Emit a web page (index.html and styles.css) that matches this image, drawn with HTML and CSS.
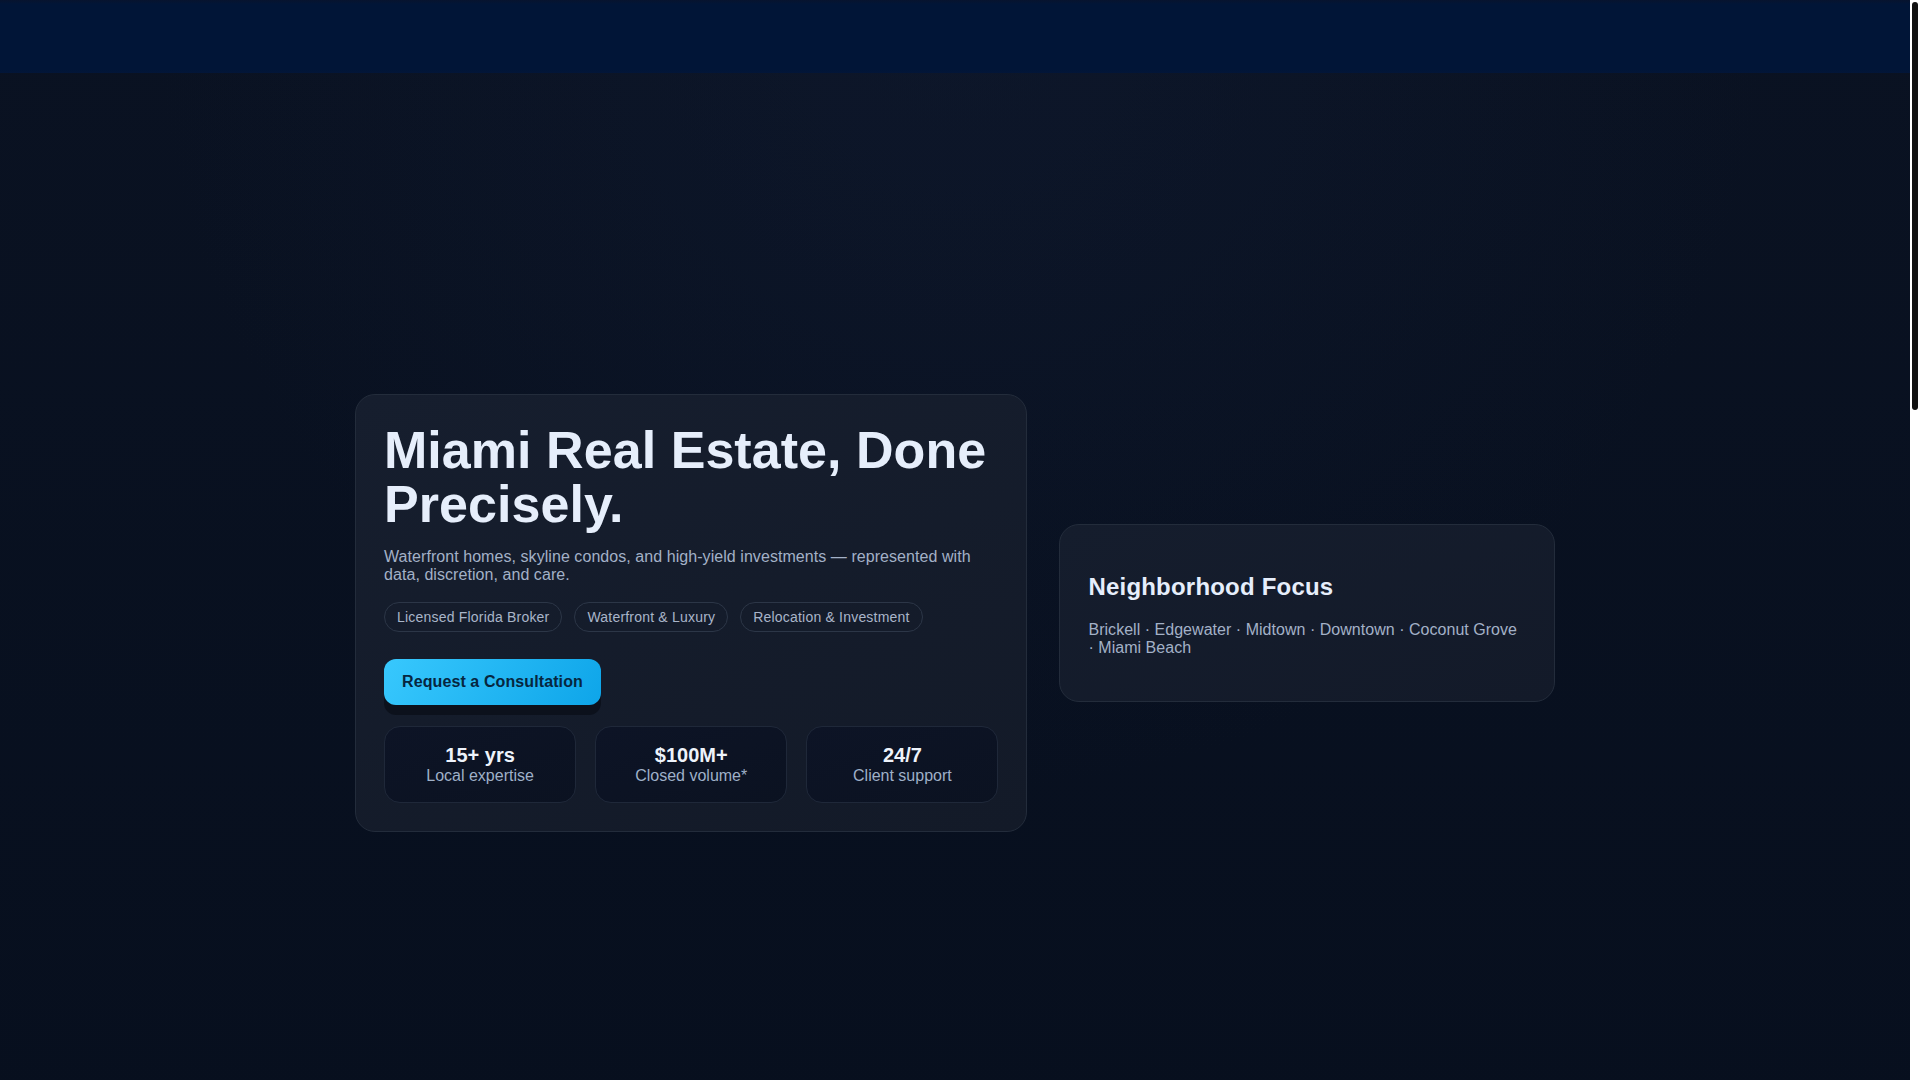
FILE: index.html
```html
<!DOCTYPE html>
<html lang="en">
<head>
<meta charset="utf-8">
<title>Miami Real Estate</title>
<link rel="stylesheet" href="styles.css">
</head>
<body>
<header class="site-header"></header>
<main>
  <section class="hero">
    <div class="hero-grid">
      <div class="hero-card">
        <h1 class="hero-title">Miami Real Estate, Done Precisely.</h1>
        <p class="hero-lead">Waterfront homes, skyline condos, and high-yield investments — represented with data, discretion, and care.</p>
        <div class="chips">
          <span class="chip">Licensed Florida Broker</span>
          <span class="chip">Waterfront &amp; Luxury</span>
          <span class="chip">Relocation &amp; Investment</span>
        </div>
        <div class="cta-row">
          <a class="btn-primary" href="#contact">Request a Consultation</a>
        </div>
        <div class="stats">
          <div class="stat"><div class="stat-value">15+ yrs</div><div class="stat-label">Local expertise</div></div>
          <div class="stat"><div class="stat-value">$100M+</div><div class="stat-label">Closed volume*</div></div>
          <div class="stat"><div class="stat-value">24/7</div><div class="stat-label">Client support</div></div>
        </div>
      </div>
      <aside class="focus-card">
        <h2 class="focus-title">Neighborhood Focus</h2>
        <p class="focus-text">Brickell ·&nbsp;Edgewater ·&nbsp;Midtown ·&nbsp;Downtown ·&nbsp;Coconut Grove ·&nbsp;Miami Beach</p>
      </aside>
    </div>
  </section>
  <section class="below"></section>
</main>
<div class="scrollbar" aria-hidden="true"><div class="scrollbar-thumb"></div></div>
</body>
</html>
```

FILE: styles.css
```css
html {
  background: #070f1d;
  scrollbar-width: none;
}
::-webkit-scrollbar {
  width: 0;
  height: 0;
}
body {
  margin: 0;
  padding-right: 10px;
  font-family: "Liberation Sans", Arial, Helvetica, sans-serif;
  color: #e6eefb;
  background:
    radial-gradient(ellipse 60% 40% at 50% 0%, rgba(20, 32, 58, 0.35), rgba(0,0,0,0) 70%),
    linear-gradient(180deg, #0a1222 0%, #070f1e 40%, #060d1b 100%);
  min-height: 100vh;
}
.site-header {
  height: 73px;
  background: linear-gradient(180deg, #07132e 0px, #011537 4px, #011537 70px, #031639 73px);
}
.hero {
  min-height: 100vh;
  display: flex;
  align-items: center;
}
.hero-grid {
  width: 100%;
  max-width: 1200px;
  margin: 0 auto;
  display: grid;
  grid-template-columns: 1.357fr 1fr;
  gap: 32px;
  align-items: center;
}
.hero-card {
  background: linear-gradient(160deg, #161e2e 0%, #131a28 100%);
  border: 1px solid #232c3b;
  border-radius: 20px;
  padding: 28px;
}
.hero-title {
  margin: 0 0 17px;
  font-size: 52px;
  line-height: 54px;
  font-weight: 700;
  letter-spacing: 0.05px;
  color: #e6eefb;
}
.hero-lead {
  margin: 0 0 18px;
  font-size: 16px;
  letter-spacing: 0.06px;
  color: #a3b1c7;
}
.chips {
  display: flex;
  flex-wrap: wrap;
  gap: 12px;
}
.chip {
  border: 1px solid #2c3647;
  border-radius: 999px;
  padding: 6px 12px;
  font-size: 14px;
  letter-spacing: 0.2px;
  color: #a9b5c9;
}
.cta-row {
  margin-top: 27px;
  display: flex;
}
.btn-primary {
  display: inline-block;
  padding: 14px 18px;
  border-radius: 12px;
  background: linear-gradient(120deg, #38c8fd 0%, #0ea5e9 100%);
  color: #06263f;
  font-size: 16px;
  font-weight: 700;
  letter-spacing: 0.1px;
  text-decoration: none;
  box-shadow: 0 10px 0 rgba(6, 9, 16, 0.55);
}
.stats {
  margin-top: 21px;
  display: grid;
  grid-template-columns: repeat(3, 1fr);
  gap: 19px;
}
.stat {
  background: linear-gradient(160deg, #0d1426 0%, #0b1221 100%);
  border: 1px solid #1f2839;
  border-radius: 16px;
  padding: 17px 12px;
  text-align: center;
}
.stat-value {
  font-size: 20px;
  font-weight: 700;
  color: #eef3fb;
}
.stat-label {
  font-size: 16px;
  color: #9fb0c8;
}
.focus-card {
  background: linear-gradient(160deg, #151d2d 0%, #131a29 100%);
  border: 1px solid #232c3b;
  border-radius: 20px;
  padding: 28px;
}
.focus-title {
  margin: 19.9px 0;
  font-size: 24px;
  font-weight: 700;
  letter-spacing: 0.2px;
  color: #e6eefb;
}
.focus-text {
  margin: 16px 0;
  font-size: 16px;
  letter-spacing: 0.03px;
  color: #a3b1c7;
}
.below {
  height: 1677px;
}
.scrollbar {
  position: fixed;
  top: 0;
  right: 0;
  width: 10px;
  height: 100vh;
  background: #ffffff;
}
.scrollbar-thumb {
  margin: 2px;
  height: 408px;
  border-radius: 3px;
  background: #111111;
}
```
